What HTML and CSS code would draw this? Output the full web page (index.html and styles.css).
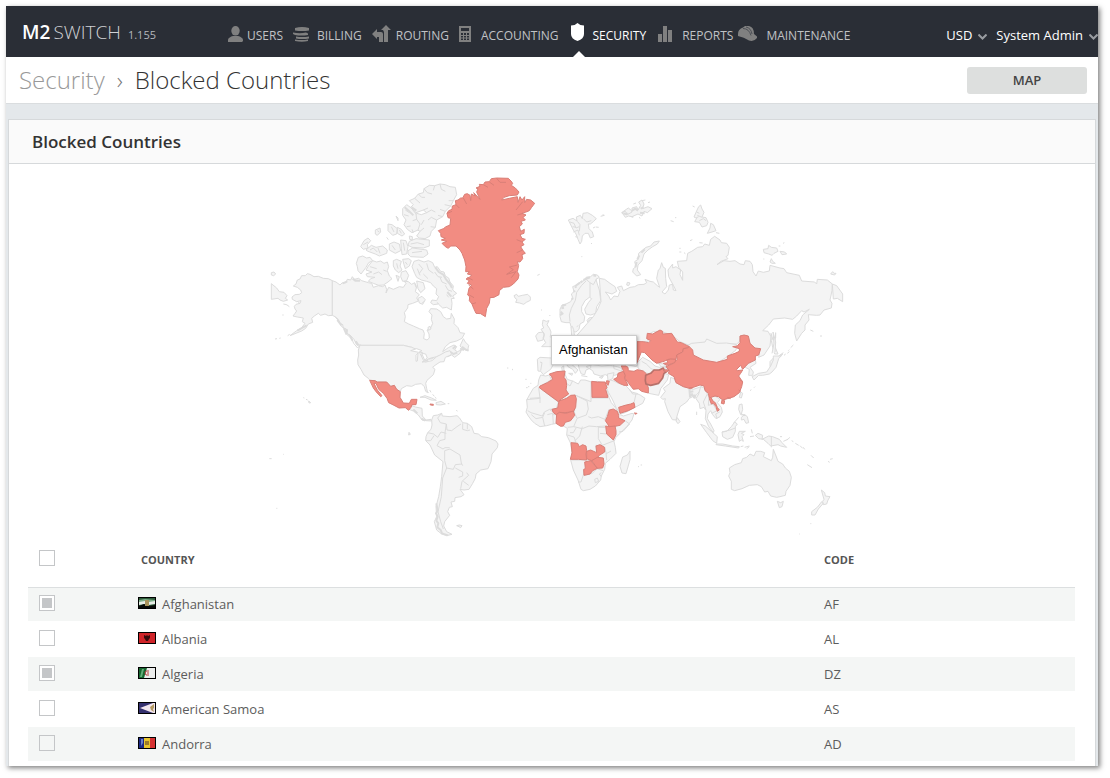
FILE: index.html
```html
<!DOCTYPE html>
<html lang="en">
<head>
<meta charset="utf-8">
<title>Blocked Countries</title>
<link rel="stylesheet" href="styles.css">
</head>
<body>
<div class="app">
  <header class="topbar">
    <div class="brand"><span class="brand-bold">M2</span><span class="brand-light">SWITCH</span><span class="version">1.155</span></div>
    <nav class="nav">
      <a href="#"><svg width="15" height="16" viewBox="0 0 15 16"><ellipse cx="7.500" cy="4.800" rx="4.200" ry="4.800"/><path d="M0 16v-2.500q1-2.500 5-3.500h5q4 1 5 3.500V15l-1 1z"/></svg>USERS</a>
      <a href="#"><svg class="i-billing" width="16" height="16" viewBox="0 0 16 16"><path d="M2 2Q9 0 16 2v2.500Q9 5.500 2 4.500zM0 6.500q7 1.500 13 0l2 1v1.500q-7 1-13 0L0 8zM3 10.500q6 1 13 0v2q-7 1-13 0zM2 13.500q7 1 13 0V15q-6 1.500-13 0z"/></svg>BILLING</a>
      <a href="#"><svg class="i-routing" width="19" height="17" viewBox="0 0 19 17"><path d="M0 9l5-5v3h4q2 0 2 2v8H7v-5H5v2zM9 5l5-5 5 5h-3v12h-4V7l-1-2z"/></svg>ROUTING</a>
      <a href="#"><svg class="i-accounting" width="12" height="16" viewBox="0 0 12 16"><path fill-rule="evenodd" d="M0 0h12v16H0zM2 2v3h8V2zM2 7v2h2V7zM5 7v2h2V7zM8 7v2h2V7zM2 10v1.500h2V10zM5 10v1.500h2V10zM8 10v1.500h2V10zM2 12.500V14h2v-1.500zM5 12.500V14h2v-1.500zM8 12.500V14h2v-1.500z"/></svg>ACCOUNTING</a>
      <a href="#" class="active" aria-current="page"><svg class="i-security" width="13" height="18" viewBox="0 0 13 18"><path d="M0 2.500q4 0 6.500-2.500Q9 2.500 13 2.500V11q0 5-6.500 7Q0 16 0 11z"/></svg>SECURITY</a>
      <a href="#"><svg class="i-reports" width="14" height="16" viewBox="0 0 14 16"><path d="M0 8h4v8H0zM5 0h4v16H5zM10 4h4v12h-4z"/></svg>REPORTS</a>
      <a href="#" class="maint"><svg class="i-maint" width="19" height="15" viewBox="0 0 19 15"><path d="M0 8Q0 3 5 1.500L7 0h4q5 1 5 8l3 2.500V12q-3 4-8 2.500Q6 11 0 10z"/><path class="groove" d="M5 2.500q6 0 8 7M8 1q5 1 6 7"/></svg>MAINTENANCE</a>
    </nav>
    <div class="account">
      <button type="button">USD<svg width="9" height="6" viewBox="0 0 9 6"><path d="M.5.500l4 4 4-4"/></svg></button>
      <button type="button">System Admin<svg width="9" height="6" viewBox="0 0 9 6"><path d="M.5.500l4 4 4-4"/></svg></button>
    </div>
  </header>
  <div class="titlebar">
    <h1><a href="#">Security</a><span class="sep">›</span><span>Blocked Countries</span></h1>
    <button type="button" class="map-btn">MAP</button>
  </div>
  <main class="content">
    <section class="card">
      <h2>Blocked Countries</h2>
      <div class="map">
        <svg viewBox="0 0 1752 1110" role="img" aria-label="World map of blocked countries">
          <!-- North America -->
          <g class="land">
            <path d="M217 332L205 326 190 325 175 319 162 320 150 313 142 311 136 317 125 317 120 327 112 330 108 342 100 348 112 352 122 360 125 368 118 373 105 374 96 381 97 388 110 395 123 392 120 400 108 403 103 409 105 417 110 423 105 430 99 438 112 441 130 444 127 455 135 460 125 473 110 482 90 497 105 491 125 483 137 475 145 462 158 457 155 445 163 438 175 430 182 436 195 432 205 437 217 436Z"/>
            <path d="M34 341L50 354 58 365 72 367 81 377 76 385 83 390 70 394 60 390 54 385 34 388zM34 308l8-2 5 6-6 5-7-2zM70 402l10 2 8 6M67 435h4M45 507l6-1M58 505l4-1M83 497l6-4"/>
            <path d="M217 332L228 336 240 345 246 339 258 338 262 328 272 330 277 320 283 328 296 325 305 332 325 338 335 340 340 352 355 347 368 350 375 345 380 358 378 369 386 352 400 358 418 350 430 352 438 340 432 333 445 335 455 343 464 338 470 350 466 365 478 374 470 384 475 393 458 400 444 404 443 414 433 428 436 440 433 455 446 462 460 468 478 476 489 480 493 490 491 506 501 510 508 504 507 492 501 480 512 474 518 460 514 448 516 435 507 425 512 416 530 417 542 425 550 440 560 447 572 445 574 430 583 447 582 461 594 473 600 488 614 490 606 505 590 513 570 518 556 530 548 545 565 533 582 525 590 530 584 540 592 545 604 540 600 550 584 562 575 555 563 560 552 553 530 560 510 565 490 575 480 570 488 548 472 545 455 532 430 526H305L290 524 282 508 270 495 260 490 262 479 250 475 248 464 240 460 235 448 225 440 217 436Z"/>
            <path d="M600 528l10-22 6 10 10 10-3 16-12-4z"/>
            <path d="M289 280L295 262 308 258 320 264 330 262 338 272 326 278 318 292 312 300 303 312 294 302 292 290zM338 272L350 276 362 273 372 280 382 276 386 290 382 302 388 318 396 326 384 336 370 345 356 346 340 340 325 334 332 326 345 322 322 320 318 312 336 306 318 300 325 288zM400 272l10-4 14 6-4 14 6 12-10 8-10-8-6-12zM428 268l18-2 8 6-6 16-12 8-4-12zM424 306l14-4 8 14-6 16-12 2-6-14zM408 316l10 4-4 14z"/>
            <path d="M456 290L462 274 476 270 492 276 505 272 518 278 524 292 532 290 542 304 552 306 556 318 566 324 570 336 580 348 578 360 590 370 578 378 583 385 574 386 576 400 574 420 560 412 548 414 535 402 520 404 512 398 516 390 530 392 536 380 528 372 530 356 520 348 512 338 500 334 484 330 470 322 464 310zM470 333l20 5 5 18-13 12-8-12zM474 385l12-6 10 10-8 14-10-4zM504 472l6-3 3 8-8 4z"/>
            <path d="M448 92L464 85 475 72 490 68 492 56 508 46 524 47 540 42 556 44 570 50 586 52 590 74 580 92 572 108 556 124 548 140 530 150 526 172 514 184 510 198 495 206 478 204 470 198 480 184 466 176 468 162 452 156 450 140 462 144 470 130 484 134 500 128 490 120 468 128 452 112 460 104z"/>
            <path d="M428 116l12-12 14 10 14 18 2 16 10 14-6 18-18 8-14-10-10-14 6-14-10-14zM448 214l20-8 40 4 0 18-18 6-34-2-12-6zM444 242l14-8 42 6 4 12-14 10-38-2-8-8zM384 162l12 2 16 12-2 16-12 4-14-14zM412 172l12 6 10 14-8 6-14-8zM408 138l6 6 0 8zM302 230l10-18 12-8 8 8-10 12 2 10-14 4zM318 240l16-14 14 6 20-4 14 12-2 10-22 8-12-6-22-8zM346 180l14-6 2 12-10 10-6-4zM388 222l14-6 16 6 4 20-16 8-18-10zM422 210l16 2 6 18-4 22-14 2-2-18zM380 202l5 7M448 198l9 2 0 10-8-2z"/>
            <path class="line" d="M225 440l12 14 8 16 14 8 2 16 14 12 6 14 12 14 8-10M248 464l-8-2M262 479l-2 12M272 498l-8-4M464 340l4 12M486 400l6-6M120 400l-6-2M535 402l-3-5"/>
            <path class="line" d="M492 56l10 12 14 4M524 47l-4 14M540 42l4 16 12 6M475 72l10 10 10 0M464 85l16 14M556 124l-16-6M572 108l-18-4M580 92l-14 0M500 128l14-8 12 6M490 120l14-6M548 140l-14-4M530 150l-16-8-10 8M526 172l-14-2M480 184l12-10M436 120l12 8M432 134l14 4M470 148l-12 4M456 178l4 10M440 170l12-2M492 150l-8 14M394 170l8 16M418 180l6 10M310 224l14-8M330 240l10-6 12 12M354 234l6 16M396 226l10 14M430 218l4 24M352 182l6 4M452 222l20-4 20 6M456 248l30-4M330 290l20 6M340 312l16-6 10 8M370 300l10 4M410 280l4 16M436 276l6 8M476 282l12 14-10 14M500 280l6 20 14 10M524 306l10 14 12 2M540 322l6 14 14 6M556 346l8 14 12 4M560 374l6 8M472 296l8 20M490 312l14 14"/>
            <path class="dark" d="M526 292l10 14 14 8 8 14 12 14 6 12M562 366l12 14M262 334l-14 6M278 326l8 6 14 0M112 482l14-8 14-8M232 450l12 16M252 476l8 18M270 498l8 14M288 514l6 12M578 536l10-8M600 536l12 4M455 112l14 10M434 112l12 10 14 14"/>
          </g>
          <!-- USA, Central and South America -->
          <g class="land" transform="translate(0 510)">
            <path d="M300 16L295 30 296 45 293 60 294 74 303 88 312 105 325 115 330 121 345 122 352 126 380 126 392 139 403 136 410 148 421 155 424 146 440 137 455 139 467 133 484 131 493 140 497 154 503 158 500 146 497 130 501 121 520 104 525 88 518 82 525 76 540 66 552 65 556 52 570 46 575 42 570 32 556 36 540 45 530 50 516 62 495 66 490 60 480 40 475 30 455 22 430 16Z"/>
            <path class="lake" d="M452 32l18-6 16 6-10 5zM468 64l0-18 6-7-2 24zM485 40l12 2 5 12-8 6zM486 66l18-6-2 5zM506 57l15-4-4 4z"/>
            <path d="M447 208L452 196 466 201 486 205 487 228 498 240 513 238 515 243 498 242 486 240 475 225 460 213zM480 172l15-5 20 7 14 7-16-1-18-8zM528 188l15-4 13 8-15 3-12-1zM563 191h5M500 153l6 5M509 150l4 7M518 163l5 6M525 172l4 3M589 210l3 4M741 84h4M756 89h3"/>
            <path d="M130 173l3 1M138 178l5 2M146 183l6 5-5 1zM447 277l4 6-5 2zM28 356h7M70 343h2M49 505h3M590 557l8-2 8 2-4 6-5-3z"/>
            <path d="M515 240L520 227 533 225 545 220 547 228 570 230 591 227 598 233 608 248 622 250 635 260 642 280 655 282 665 290 685 293 708 303 714 312 712 323 696 342 693 365 684 386 662 390 648 402 646 415 638 430 627 448 612 450 600 448 612 464 603 470 585 473 584 484 573 486 577 500 568 502 563 515 569 526 554 545 551 558 560 575 576 583 560 587 545 582 530 570 523 545 530 530 528 500 536 470 541 440 545 410 549 365 543 360 524 345 510 315 497 302 498 290 503 278 513 268 516 255Z"/>
            <path class="line" d="M545 220l-12 14 8 14 18 4 2 18 14 2 16-12 12-8M559 252l-4 26 0 20-16 4-8 15 18 10 6-4 14 0M503 278l18 4 12 10 10-16 16 4M498 302l14 0 10-15M608 250l0 18 14 4 8-2M622 250l0 18M570 327l-16 5 0 30M570 327l30 18 4 24 4 8M554 362l6 22 20 4 6-14 20-2M586 384l22 12 0 12-12 4M620 398l6 8-20 18-4 22M610 424l16 12M560 384l-12 30-4 56-10 45 8 30 8 22"/>
            <path class="dark" d="M529 490l4 22-5 8 5 10-4 12 6 8-3 12 10 8 4 10 18 6M460 208l12 12M484 236l12 6M572 36l8 6 12-4M286 4l10 12M606 20l10 8 10 4"/>
            <path class="red" d="M329 121L345 122 352 126 380 126 392 139 403 136 410 148 421 155 420 172 430 189 448 190 454 178 471 178 468 194 456 194 453 202 446 211 436 203 417 204 402 196 386 188 381 175 370 160 356 148 348 130 342 130 352 150 366 167 362 170 348 155 340 144zM510 192l10 1 0 3-9-1z"/>
          </g>
          <!-- Greenland, Svalbard, Iceland, Scandinavia -->
          <g transform="translate(510 0)">
            <path class="red" d="M25 182L40 176 48 170 60 165 62 145 54 143 51 130 56 122 66 118 67 108 78 104 76 92 84 90 92 84 98 84 104 73 112 71 120 76 122 92 124 72 136 78 131 68 150 88 140 66 144 56 138 54 150 49 148 43 160 44 165 36 178 35 184 26 200 24 235 25 243 33 248 40 244 46 256 54 267 66 262 75 238 77 222 82 215 90 238 85 262 80 264 97 270 80 276 90 284 80 284 98 290 88 302 90 314 100 305 112 298 122 286 127 276 130 288 135 279 142 286 150 273 154 277 162 268 170 272 184 283 178 282 190 270 194 276 205 286 208 276 216 282 224 272 230 278 240 286 250 276 254 278 266 270 276 262 275 266 287 262 305 267 315 264 327 250 342 238 350 220 352 208 362 207 374 192 382 180 383 178 400 170 415 166 440 152 431 138 430 131 415 126 402 118 392 119 380 113 375 117 355 125 345 112 340 118 332 108 327 118 322 125 315 112 312 118 305 107 305 108 290 104 270 96 250 90 240 78 228 62 228 55 235 46 230 36 220 50 214 34 210 46 205 33 200 32 190Z"/>
            <path class="redline" d="M160 44l14 8M178 36l14 10M200 25l10 12 18 0M262 135l14-4M258 120l20-25M100 84l10 18M78 104l10 10M262 285l-24 6 12 8-20 14 28-8-14 18M275 215l-15-6M278 240l-18 8M116 345l14 12M112 322l16 8M118 375l14 8M126 402l12-4M52 130l14-6"/>
            <g class="land">
              <path d="M252 377l8-4 5 6 12-3 16-3 8 8 0 10-12 6-8 6-12-4-12-2 4-8-6-5zM322 316l7-3M454 260h3M333 419l3 2M358 435l3 3M483 219l3 3M512 139l11-3-5-2M489 174l6-3M497 171l9 1"/>
              <path d="M415 150l14-5 12 8-2-12 12-5 6 10 2-16 14-2 14 8 12 10-8 8-10 8-6 0 2 14 10 10 4 14-10 4-6-14-10 0-8 8-2 16-5 8-6-14-6-16-8-12zM575 128l14-10 6-4 10 8 4 20-10-4-6-8z"/>
              <path class="line" d="M420 156l12 4 6 14 10-4M430 186l14-6 4 16M442 154l8 10-2 20M460 146l10 10 14-4M428 170l10 2M436 200l8 2"/>
              <path d="M390 418L396 405 408 402 422 395 428 383 424 372 432 365 428 350 440 345 452 335 462 332 468 322 482 320 490 313 502 315 508 322 498 328 502 342 508 360 511 382 512 392 500 410 497 430 482 435 468 432 464 418 475 398 485 386 478 382 465 392 455 410 455 425 464 440 462 455 450 462 447 478 438 486 430 485 423 470 420 458 408 458 394 455 390 440z"/>
              <path class="line" d="M420 455l-2-20 6-20 12-24 4-24 14-20 14-14M468 328l12 10 0 44M480 338l10 6 10-18"/>
              <path class="dark" d="M390 435l8-4-6-6M394 415l8-2M424 385l6 2M430 365l6-2M434 352l6-2M452 338l5-5M470 325l6-3M490 316l8 2M396 408l12-4M436 348l14-10M460 330l20-8M344 462l8 6M350 480l8 8"/>
              <path d="M425 495l-2-24 4-2 4 10 2 16M466 495l2-14 0-12 9-7-6-10 6-8 22-4 8-14 80-40 0 111z"/>
              <path d="M333 478l8-4-4-10 2-14 10 4 8-2-6 12 8 12 4 10-2 14 10 12-6 18-30 0 12-12-8-14 4-12zM317 498l8-10 14-2 4 10-4 14-16 4z"/>
              <path d="M446 492l6-6 14-2 4 12zM475 465l18-6M472 455l20-14M440 470l5-3"/>
            </g>
          </g>
          <!-- Russia, Mongolia and the Arctic -->
          <g class="land" transform="translate(1080 60)">
            <path d="M-62 265L-46 268 -30 280 -15 290 -10 304 -24 312 -44 306 -34 318 -28 330 -18 318 -6 320 0 304 -8 292 5 288 10 302 30 292 44 290 55 284 72 283 80 278 75 268 90 274 100 276 112 287 119 292 110 265 115 240 120 236 125 218 130 232 136 235 137 265 140 290 126 306 135 312 145 300 148 285 158 283 160 300 168 302 160 286 146 260 144 240 150 232 158 222 158 234 168 230 182 240 180 254 188 271 188 246 176 232 172 214 200 212 203 190 215 184 233 172 248 170 254 162 268 166 272 148 284 139 300 150 304 158 320 160 328 172 324 196 318 200 324 206 303 214 291 224 312 212 330 214 345 212 360 222 372 224 376 212 390 214 397 224 399 245 408 258 415 243 430 247 448 243 450 226 480 234 492 236 500 248 538 256 545 273 584 276 590 282 592 268 622 270 637 282 636 302 630 330 636 340 634 354 612 360 600 375 590 376 565 374 567 390 555 405 555 420 545 430 530 453 524 430 526 405 540 392 548 375 568 358 552 366 545 362 530 378 518 388 494 384 460 387 446 405 428 422 444 424 453 440 450 468 432 495 416 502 420 478 403 478 390 460 385 440 375 436 360 438 358 455 350 462 320 462 290 465 262 450 255 458 215 462 205 465 180 455 155 435 125 425 100 425 82 435 85 455 55 455 50 530 20 524-80 515-150 460-98 400-80 380-68 360-57 335z"/>
            <path d="M205 465L215 460 255 456 260 447 290 460 320 459 350 464 348 480 322 500 290 520 230 515 205 495z"/>
            <path d="M637 282L650 287 668 312 668 335 652 325 640 327z"/>
            <path d="M118 153L112 162 98 170 84 180 72 192 66 212 54 225 52 240 62 254 50 258 38 246 40 236 48 230 44 215 54 208 56 190 68 180 78 172 92 168 102 156zM22 277l8 2-4 8-6-2z"/>
            <path d="M6 68l10-4 6 10 14-8 0-12 14-4 4 10 8-14-6-10 10-6 6 12-4 14 16-6 12 6-14 12-10-4-6 14-12-6-18 8-10-2-10 4zM66 32l10-2M84 38l6-2M40 42l8-3M57 82l4 3M152 92l9 3M165 83h4"/>
            <path class="dark" d="M10 70l12 4M36 62l10-6 8 6M62 56l8-4M60 68l14 2M50 216l-4 16M58 196l-6 12M74 178l-10 10"/>
            <path d="M218 48l6 3M236 50l6-5 4 12 6 10-6 14 12 2 6 14-4 10-14 4-8-14-14-2 6-10-8-4 6-14zM262 130l8-16 2-14 8 4 8 18-12 4zM288 128l10 2M210 152l7-3M238 158l10 1M178 175h4M178 186h6M192 188l4 3"/>
            <path class="line" d="M232 76l14 6M238 92l12-6 8 6M228 84l8-4M230 66l8 4"/>
            <path d="M430 178l14-2 2-10 8 6 16 2 4 10-12 6-6 6-10-4-14-4zM480 184l14 2 6 6-14 2zM476 168h5M489 160l4-2M450 216l4-10 4 8 8 6-10 0zM430 207h3M632 252l6-7 4 5 6 0-4 5z"/>
            <path d="M453 430l6 20 8-6 0-16-3 40 10 24-10 0-6-20-4-20zM520 465l-8 8M508 485l-6 5M485 497l-8 5M497 492l-5 4M571 420l9 4M600 438h6M450 515l14-15 10 10-14 16-10 4z"/>
          </g>
          <!-- Africa, Middle East, southern Europe -->
          <g transform="translate(750 450)">
            <g class="land">
              <path d="M82 118L90 112 125 114 132 130 122 148 108 158 100 164 92 154 84 153zM168 130l16 2 20 18-8 10-8-12-14-8zM204 130l38-2 0 16-14 6-4 14-10-2-6-14zM228 140l20-6 28 4 24-2 22 4 14 6-4 14-18 6-20 2-8-4-14 4-20-6-4-10zM214 167l18 3M268 172l12-4-4 7zM176 160l12 0-2 6zM155 142l6-4 1 14-5 1zM310 130l24 4 8 14-10 4-20-6z"/>
              <path class="line" d="M90 126l6 2-4 24"/>
              <path d="M92 165L107 168 118 165 140 155 165 153 166 165 172 178 190 184 205 192 212 180 225 180 245 186 262 184 285 188 290 205 297 232 304 248 316 262 328 283 340 288 366 280 372 282 366 300 350 320 330 340 318 352 312 365 316 382 318 400 300 418 286 430 284 448 274 468 272 480 256 498 240 508 220 512 213 508 204 480 190 450 182 420 186 400 182 370 170 345 172 325 160 318 140 310 125 313 110 317 90 320 74 310 64 300 55 288 48 276 52 262 50 240 60 222 70 205 84 196 86 180z"/>
              <path class="line" d="M118 165l6 14-24 14-14 10 4 32-40 4M100 212l45 34-6 20-20 2-16 8-6 12-34-10-10-6M60 235l30-2 0 16M64 284l14 12 20-4 6 26M98 292l6-14M120 270l20 12M112 284l16-4 2 32M128 284l12 0M170 190l10 8 8-16M165 235l30-10 48 20 0-60M195 225l36 18 4 24-6 18-28 10-8-18 4-30M243 234h52M235 290l10 4 20-4 20 8 12-30M201 296l-10 24 26 6 20-8 22 2 28-2M191 320l-18 2M180 338l10 0 8-14M172 345l20 6 6 16-14 4M217 320l-8 28-16 16M265 318l0 38 12 20-20 0 4 24M265 322l20 0M270 340l20 2M277 376l36-14M285 385l4 16 14-8M288 400l2 20M184 420l46 0 20 0M221 450l0 12-8 24-9 0M225 466l22-6 14-14 18 6M254 478l8-4 4 10-10 4zM274 470l-6-8 6-4M345 302l14 10-20 22-12 2"/>
              <path d="M360 393l-8 12-14 6-8 28 6 20 12 2 12-42zM384 440h3M392 435h3M7 148h2M46 178h4M61 190h3M48 203h5M54 200h4"/>
              <path d="M290 190L300 180 312 183 325 190 345 195 358 208 365 216 380 220 392 226 405 235 398 250 375 262 345 278 332 282 318 262 308 240 296 218 290 205zM292 162l20-4-4 18-14 6z"/>
              <path d="M382 128L398 112 420 124 435 138 448 142 465 138 470 150 435 152 420 162 405 158 392 150 384 144zM445 130l18 2 12 8-20 2zM406 192l10 4 24-2 22-34 14 4-4 16-20 26-6 20-30-6-8-8z"/>
              <path class="line" d="M395 124l14 8 14 14 16 6M372 248l6-26M358 208l10 14 16 0"/>
            </g>
            <g class="red">
              <path d="M118 162L140 155 165 153 162 172 168 180 170 196 168 210 176 222 150 240 145 245 100 212 88 203 90 198 112 188 128 178 125 170Z"/>
              <path d="M147 243L170 235 182 226 195 225 199 236 197 262 190 275 165 278 148 277 140 285 130 278 126 268 143 264Z"/>
              <path d="M140 283L148 277 168 280 190 273 194 286 182 302 166 307 160 318 152 319 138 310Z"/>
              <path d="M245 184L262 186 285 186 291 203 287 208 294 232 246 232Z"/>
              <path d="M298 270L310 267 322 274 326 286 326 294 345 302 330 316 310 320 298 320 286 302 292 290Z"/>
              <path d="M287 318L298 320 315 318 318 332 318 344 310 360 290 342Z"/>
              <path d="M183 368L203 370 208 380 218 374 228 378 230 392 228 402 230 420 205 418 181 418 186 398Z"/>
              <path d="M230 394L242 390 260 398 258 378 270 374 284 382 284 396 268 406 258 418 245 422 230 416Z"/>
              <path d="M245 422L262 412 280 414 282 432 278 444 262 445Z"/>
              <path d="M224 426L242 422 262 445 248 452 240 462 222 466 221 448 226 446Z"/>
              <path d="M326 262L345 256 362 252 372 248 375 262 355 272 330 280zM373 279l8 1-3 3zM290 182l8 2-4 12-6-8z"/>
              <path d="M311 178L322 172 324 160 340 154 346 166 344 176 354 196 342 196 328 190Z"/>
              <path d="M334 138L348 138 354 142 355 152 372 154 382 149 400 153 410 162 406 178 408 190 415 202 415 219 395 214 385 206 370 208 356 190 344 174 346 166Z"/>
              <path class="focus" d="M407 166L416 162 422 160 432 150 448 150 460 144 463 152 476 151 462 160 458 174 446 190 422 196 408 192 406 182Z"/>
            </g>
          </g>
          <!-- South and East Asia, Oceania -->
          <g transform="translate(1140 450)">
            <g class="land">
              <path d="M62 232L76 214 70 205 90 190 92 172 102 176 108 188 130 200 152 206 160 208 184 200 178 215 168 226 165 235 158 230 148 235 140 246 120 260 112 285 108 300 97 299 84 275 74 245 76 236 68 238zM112 293l8 12-6 6-6-8z"/>
              <path class="dark" d="M148 206l2 24 6-8 6 10 4-8M150 216l10-2"/>
              <path d="M182 200L195 205 202 222 207 232 225 228 240 238 232 248 244 262 247 276 240 290 228 296 218 284 212 272 204 282 202 296 212 312 222 332 220 338 206 320 196 296 198 272 192 262 180 266 178 250 168 236 176 222z"/>
              <path class="line" d="M202 222l-12 24 8 24M207 232l-2 24 14-4 12 20-16 8M231 296l-4-14 12-6M170 275v10"/>
              <path d="M312 140L325 130 346 120 348 130 330 142 340 156 338 166 326 166 328 148zM400 108l18 0 10-6-12 14-8 26-12 14-8 6-20 4-12 0-14 14-6-10 20-10 24-4 12-18 8-18zM396 100l6-30-3-34 8 30-2 30M430 98l-14 10M445 92l3-3"/>
              <path d="M298 232l4-16 6 4-4 14zM330 212l4-3M342 203l3-3M298 254l8-2 2 16-4 14 12 4-14-2-6-16zM304 292l10-8 8 6 4 18-8 2-6-12-8 2zM296 292l-14 16"/>
              <path d="M182 313L196 318 214 334 232 350 230 370 218 362 200 338zM228 372l20 0 30 6 20 2-2 4-40-6-28-4zM302 380l8-2M314 382l14-4M320 386l8-6M246 336l14-2 14-14 10-14 8 6-6 8 0 14-8 18-16 6-14-8zM294 344l4-10 18 0-12 6 8 4-6 6 4 14-6-4-6 4zM334 328l3 12M330 350l12-2M346 346l8-6 14 6-2 12 20-10 12 2 20 8 8 10 14 14-18-4-8-4-22 4-8-8-14-12-14-2zM430 364l14-6 5-6M420 350l6 0M455 362l5 3M466 370l10 6M480 377l8 8M490 382l4 6M513 406l8 8M502 434l14 9M564 424l5 3M570 418l8-2M5 434v2"/>
              <path class="line" d="M394 350v32M246 336l24-6 16-6"/>
              <path d="M268 444L284 434 304 428 308 416 320 412 330 402 342 408 348 394 362 394 374 398 370 410 394 422 398 412 400 388 408 408 414 424 428 432 436 444 448 454 454 472 450 496 438 514 436 526 420 530 410 532 392 528 384 514 374 516 364 500 352 494 328 496 306 506 284 512 274 508 274 484 266 468 270 458zM412 544l10 4 8-4-4 16-8 3z"/>
              <path d="M544 510l10 8 2 10 14 2-6 10-4 12-10 2-2-10 4-6zM545 545l4 6-14 16-10 18-10 0 0-10 18-14zM511 611h3M478 642h2"/>
            </g>
            <g class="red">
              <path d="M-9 65L10 65 26 68 32 62 20 56 22 40 38 42 60 30 68 34 68 42 95 40 112 66 124 68 148 80 142 84 130 86 128 96 110 105 108 118 85 118 72 124 50 130 36 120 14 98 4 96 -9 128Z"/>
              <path d="M148 80L158 90 160 105 190 120 230 127 262 118 262 108 285 100 298 94 298 86 278 80 292 78 300 68 300 48 312 45 325 48 330 70 345 84 362 86 356 105 346 108 346 120 325 130 308 148 302 136 290 148 292 152 308 150 302 160 296 168 308 186 305 200 298 218 282 230 262 236 248 240 235 230 225 228 208 234 205 220 195 212 192 198 180 195 160 202 152 206 130 200 108 188 102 170 85 160 88 152 78 140 100 130 112 118 110 105 128 96 130 86 142 84Z"/>
              <path d="M80 120L92 117 108 118 104 128 80 136 70 130 84 128zM70 150l16 0-6 6zM246 240l8 2-2 10-8-2zM208 236l4-4 8 12 6 4 6 14 6 8-6 4-4-14-8-10-6 2z"/>
              <path class="redline" d="M300 180l8 4M296 210l6 4M262 232l10 4M148 203l12 0"/>
            </g>
          </g>
        </svg>
        <div class="tooltip" role="tooltip">Afghanistan</div>
      </div>
      <table>
        <thead>
          <tr><th class="pick"><input type="checkbox" aria-label="Select all countries"></th><th class="country">COUNTRY</th><th>CODE</th></tr>
        </thead>
        <tbody>
          <tr><td><input type="checkbox" id="af" checked></td><td><label for="af"><svg class="flag" viewBox="0 0 16 10"><path fill="#2c5a38" d="M0 0h16v10H0z"/><path fill="#7db08a" d="M0 2l6-1 10 1v2H0z"/><path fill="#e8eee8" d="M0 4l6-1 4 1 6-1v3l-6 1-4-1-6 1z"/><path fill="#080a08" d="M0 8l5-2 5 2 6-1v3H0z"/><path fill="#a8935c" d="M6 2h4v6H6z"/></svg>Afghanistan</label></td><td>AF</td></tr>
          <tr><td><input type="checkbox" id="al"></td><td><label for="al"><svg class="flag" viewBox="0 0 16 10"><path fill="#cf2429" d="M0 0h16v10H0z"/><path fill="#360a0c" d="M5 2l2 1 1-1 1 1 2-1v3l-1 1-1 2H7L6 6 5 5z"/></svg>Albania</label></td><td>AL</td></tr>
          <tr><td><input type="checkbox" id="dz" checked></td><td><label for="dz"><svg class="flag" viewBox="0 0 16 10"><path fill="#eceeed" d="M0 0h16v10H0z"/><path fill="#176630" d="M0 0h8L5 10H0z"/><path fill="#63ad78" d="M3 1h2L3 9H1z"/><path d="M10 3Q6 2 6 5t4 2M8 5h2" fill="none" stroke="#b53c3c"/></svg>Algeria</label></td><td>DZ</td></tr>
          <tr><td><input type="checkbox" id="as"></td><td><label for="as"><svg class="flag" viewBox="0 0 16 10"><path fill="#34306e" d="M0 0h16v10H0z"/><path fill="#f2e6ee" d="M1 5L14 0h2v10h-2z"/><path fill="#b39a63" d="M11 4l4-3v4l-1 1 1 3-3-2z"/></svg>American Samoa</label></td><td>AS</td></tr>
          <tr><td><input type="checkbox" id="ad"></td><td><label for="ad"><svg class="flag" viewBox="0 0 16 10"><path fill="#1e2a85" d="M0 0h5v10H0z"/><path fill="#e9c52e" d="M5 0h6v10H5z"/><path fill="#d63232" d="M11 0h5v10h-5z"/><path fill="#997b2b" d="M6 3h4v4H6z"/><path fill="#6a82cb" d="M2 1h2v4L2 8z"/></svg>Andorra</label></td><td>AD</td></tr>
        </tbody>
      </table>
    </section>
  </main>
</div>
</body>
</html>
```
FILE: styles.css
```css
* { box-sizing: border-box; }
body {
  margin: 0;
  padding: 6px 12px 12px 6px;
  background: #fff;
  color: #5c5c5c;
  font: 13px/18px "Open Sans", "Noto Sans", sans-serif;
}
a { color: inherit; text-decoration: none; }
button { border: 0; background: none; padding: 0; font: inherit; color: inherit; cursor: pointer; }
.app { background: #e4e8eb; box-shadow: 2px 2px 5px rgba(0, 0, 0, .5); }

.topbar { display: flex; height: 51px; background: #2a2e36; color: #fff; }
.brand { display: flex; align-items: baseline; width: 222px; padding: 10px 0 0 16px; line-height: 32px; white-space: nowrap; }
.brand-bold { font-size: 19px; font-weight: 600; margin-right: 3px; }
.brand-light { font-size: 19px; font-weight: 300; color: #d0d2d5; }
.version { margin-left: 7px; font-size: 11px; color: #b5b8bd; }
.nav { display: flex; gap: 10px; font-size: 12px; color: #c0c2c5; }
.nav a { position: relative; display: flex; align-items: center; gap: 4px; padding-top: 8px; white-space: nowrap; }
.nav svg { fill: #808080; margin-bottom: 4px; flex: none; }
.nav .i-billing { margin-right: 4px; }
.nav .i-routing { margin-right: 1px; }
.nav .i-accounting { margin-right: 6px; }
.nav .i-security { margin: 0 5px 7px 2px; fill: #fff; }
.nav .i-reports { margin: 0 6px 4px 2px; }
.nav .i-maint { margin-right: 5px; }
.nav .maint { margin-left: -5px; }
.nav .groove { fill: none; stroke: #4d5056; }
.nav .active { color: #fff; }
.active::after {
  content: "";
  position: absolute;
  left: 4px;
  bottom: 0;
  border: 6px solid transparent;
  border-bottom-color: #fff;
  border-top: 0;
}
.account { display: flex; gap: 9px; margin-left: auto; padding-top: 7px; }
.account button { display: flex; align-items: center; gap: 6px; white-space: nowrap; }
.account svg { fill: none; stroke: #999ca1; stroke-width: 2; margin-top: 4px; }

.titlebar { display: flex; justify-content: space-between; align-items: center; height: 47px; padding: 0 11px 0 13px; background: #fff; border-bottom: 1px solid #dadddf; }
h1 { display: flex; margin: 0; font-size: 24px; line-height: 32px; font-weight: 300; color: #333; }
h1 a { color: #999; }
.sep { margin: 0 12px; color: #777; }
.map-btn { width: 120px; height: 27px; border-radius: 3px; background: #dddfde; color: #444; font-weight: 600; }

.content { padding: 15px 2px 0; }
.card { background: #fff; border: 1px solid #d6d9db; border-bottom: 0; padding-bottom: 5px; }
h2 { margin: 0; padding: 10px 23px 9px; font-size: 17px; line-height: 24px; font-weight: 600; color: #333; background: #fafafa; border-bottom: 1px solid #d6d9db; }

.map { position: relative; width: 584px; margin: 6px auto 0; }
.map svg { display: block; width: 100%; }
.land path { fill: #f4f4f4; stroke: #dcdcdc; stroke-width: 3; stroke-linejoin: round; }
.land .line { fill: none; }
.land .dark { fill: none; stroke-width: 6; }
.land .lake { fill: #fff; }
.land .red, path.red, .red path { fill: #f28c82; stroke: #d97f77; stroke-width: 3; stroke-linejoin: round; }
path.redline, .red .redline { fill: none; stroke: #d97f77; stroke-width: 3; }
.red .focus { stroke: #b8716a; stroke-width: 5; }
.tooltip {
  position: absolute;
  left: 291px;
  top: 165px;
  padding: 5px 8px 5px 7px;
  border: 1px solid #ccc;
  background: #fff;
  box-shadow: 1px 1px 3px rgba(0, 0, 0, .3);
  color: #000;
  font-family: "Liberation Sans", Arial, sans-serif;
}

table { width: calc(100% - 39px); margin: 0 20px 0 19px; border-collapse: collapse; table-layout: fixed; text-align: left; }
th { height: 47px; padding: 0 0 7px; font-size: 11px; font-weight: 700; color: #555; border-bottom: 1px solid #dcdfe0; }
th:last-child, td:last-child { width: 251px; }
.pick { width: 110px; }
th.country { padding-left: 3px; }
td { height: 36px; padding: 0; }
td:first-child, th:first-child { padding-left: 11px; }
td:first-child { padding-bottom: 3px; }
th:first-child { padding-bottom: 11px; }
tbody tr:nth-child(odd) td { height: 34px; background: #f4f6f5; }
input { display: block; appearance: none; width: 16px; height: 16px; margin: 0; border: 1px solid #c4c6c8; }
input:checked { background: #c4c6c8; box-shadow: inset 0 0 0 2px #fff; }
label { display: flex; align-items: center; gap: 6px; }
.flag { width: 18px; height: 12px; border: 1px solid #000; margin-bottom: 3px; }
```
